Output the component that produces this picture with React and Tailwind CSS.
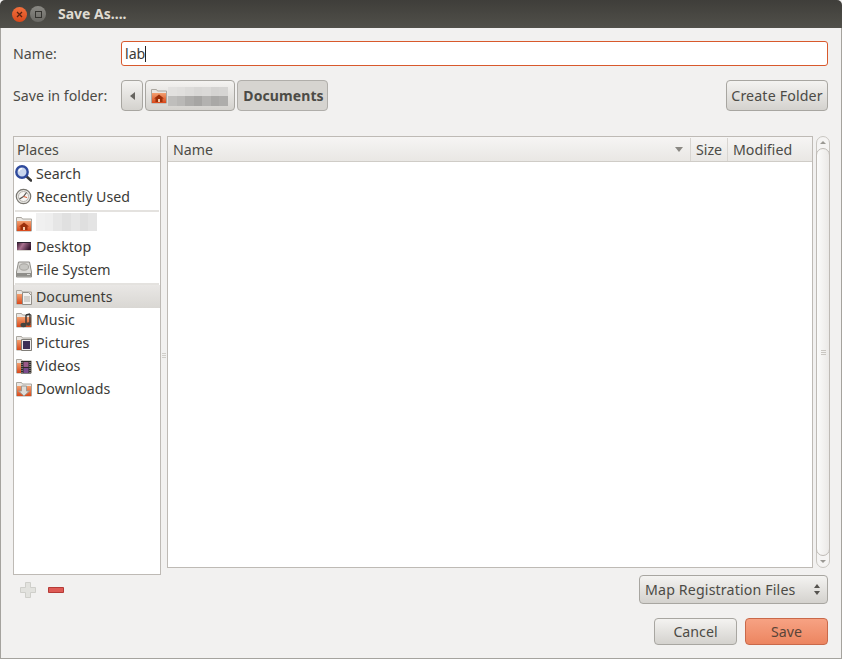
import React from 'react';

const FONT = "font-['Noto_Sans','Open_Sans',sans-serif]";

const Folder = ({ children }) => (
  <svg width="16" height="16" viewBox="0 0 16 16" className="shrink-0">
    <defs>
      <linearGradient id="fold" x1="0" y1="0" x2="0" y2="1">
        <stop offset="0" stopColor="#f3a070" />
        <stop offset="1" stopColor="#d9481a" />
      </linearGradient>
    </defs>
    <path d="M0.500 1.500h5l1 1.500h9v12h-15z" fill="#e9e6e2" stroke="#aaa69f" />
    <path d="M1 5h14v10H1z" fill="url(#fold)" />
    {children}
  </svg>
);

const HomeFolder = () => (
  <Folder>
    <path d="M8 6.500l5 4h-1.500v3.500h-7v-3.500H3z" fill="#9c2f0a" />
    <path d="M7 11h2v3H7z" fill="#f5c9a8" />
  </Folder>
);

const SearchIcon = () => (
  <svg width="17" height="17" viewBox="0 0 17 17" className="shrink-0">
    <path d="M11 11l5 4.500" stroke="#3a3a3a" strokeWidth="2.600" strokeLinecap="round" />
    <circle cx="7" cy="7" r="5.700" fill="#c9d6ee" stroke="#2f4a9c" strokeWidth="2.400" />
    <path d="M4 6.500a3.200 3.200 0 0 1 3.200-2.800" stroke="#fff" strokeWidth="1.200" fill="none" />
  </svg>
);

const ClockIcon = () => (
  <svg width="17" height="17" viewBox="0 0 17 17" className="shrink-0">
    <circle cx="8.500" cy="8.500" r="7.200" fill="#e6e5e2" stroke="#77756f" strokeWidth="1.200" />
    <circle cx="8.500" cy="8.500" r="5" fill="#f7f6f4" stroke="#b7b4ae" />
    <path d="M8.500 8.500l-4 2.500M8.500 8.500l3-4" stroke="#55534f" strokeWidth="1.200" />
    <path d="M8.500 8.500l3.500 1" stroke="#d9532c" />
  </svg>
);

const DesktopIcon = () => (
  <svg width="16" height="16" viewBox="0 0 16 16" className="shrink-0">
    <defs>
      <linearGradient id="desk" x1="0" y1="0" x2="1" y2="0.4">
        <stop offset="0" stopColor="#2c1126" />
        <stop offset="0.450" stopColor="#a9708f" />
        <stop offset="1" stopColor="#3a1a33" />
      </linearGradient>
    </defs>
    <path d="M1 3h14v9H1z" fill="url(#desk)" />
    <path d="M1 3h14v1H1z" fill="#2b2330" />
    <path d="M1 11h14v1H1z" fill="#d8d4d0" />
  </svg>
);

const DiskIcon = () => (
  <svg width="16" height="17" viewBox="0 0 16 17" className="shrink-0">
    <path d="M2.500 1h11l2 10v5H.5v-5z" fill="#dcdbd8" stroke="#8f8d88" />
    <ellipse cx="8" cy="6" rx="4.500" ry="3.200" fill="#c7c6c2" stroke="#a5a39e" />
    <path d="M1 12h14v3.500H1z" fill="#8f8e8a" />
    <path d="M11 13.500h3" stroke="#d6d5d2" />
  </svg>
);

const DocEmblem = () => (
  <>
    <path d="M6.500 3.500h6l3 3v9h-9z" fill="#f2f1ef" stroke="#918e88" />
    <path d="M8 8h6M8 10h6M8 12h6" stroke="#b2afa9" />
  </>
);

const MusicEmblem = () => (
  <>
    <path d="M10 3v9M14 2v9M10 3l4-1" stroke="#333" strokeWidth="1.400" fill="none" />
    <ellipse cx="7.500" cy="13" rx="3" ry="2.200" fill="#45443f" />
    <ellipse cx="12.500" cy="12" rx="2.300" ry="1.800" fill="#45443f" />
  </>
);

const PictureEmblem = () => (
  <>
    <path d="M5.500 4.500h10v11h-10z" fill="#efeeec" stroke="#807e78" />
    <path d="M7 6h7v8H7z" fill="#3d2f55" />
  </>
);

const VideoEmblem = () => (
  <>
    <path d="M5 3h10v12.500H5z" fill="#2f2c2a" />
    <path d="M7.500 4h5v5h-5z" fill="#9a5a88" />
    <path d="M7.500 10h5v5h-5z" fill="#7a4a8c" />
    <path d="M6 4v11M14 4v11" stroke="#b9b5ae" strokeDasharray="1 1" />
  </>
);

const DownloadEmblem = () => (
  <path d="M5.500 5h5v5h3l-5.500 5-5.500-5h3z" fill="#dedcd8" stroke="#9d9a94" />
);

// pixelated block standing in for the blurred-out user name
const Blur = ({ cells, className }) => (
  <div className={`flex ${className}`}>
    {cells.map((c, i) => (
      <div key={i} className="h-full flex-1" style={{ backgroundColor: c }} />
    ))}
  </div>
);

const PlaceRow = ({ icon, label, selected, children }) => (
  <div
    className={`h-[23px] flex items-center pl-px gap-[4px] ${
      selected ? 'bg-gradient-to-b from-[#e9e7e5] to-[#d9d7d3]' : ''
    }`}
  >
    <div className="w-[17px] flex justify-center shrink-0">{icon}</div>
    {label ? <span className="text-[#3c3b37]">{label}</span> : children}
  </div>
);

const Btn = ({ children, className = '' }) => (
  <div
    className={`flex items-center justify-center rounded-[4px] border border-[#a8a6a1] bg-gradient-to-b from-[#f4f3f1] to-[#d4d2ce] text-[#4c4b46] ${className}`}
  >
    {children}
  </div>
);

const Head = ({ children, className = '' }) => (
  <div className={`h-[25px] flex items-center bg-gradient-to-b from-[#f6f5f4] to-[#e9e7e4] border-b border-[#cfccc7] text-[#4c4b46] ${className}`}>
    {children}
  </div>
);

export default function App() {
  return (
    <div className={`w-[842px] h-[659px] flex flex-col bg-[#f2f1f0] text-[14.2px] leading-5 text-[#3c3b37] overflow-hidden ${FONT}`}>
      {/* title bar */}
      <div className="h-[28px] shrink-0 flex items-center pl-[12px] bg-gradient-to-b from-[#3f3e3a] to-[#51504a] rounded-t-[5px]">
        <div className="w-[15px] h-[15px] rounded-full bg-gradient-to-b from-[#f2703d] to-[#d9481a] flex items-center justify-center">
          <svg width="7" height="7" viewBox="0 0 7 7">
            <path d="M1 1l5 5M6 1l-5 5" stroke="#5a2310" strokeWidth="1.300" />
          </svg>
        </div>
        <div className="ml-[3px] w-[16px] h-[16px] rounded-full bg-gradient-to-b from-[#8a8984] to-[#6a6964] flex items-center justify-center">
          <div className="w-[7px] h-[7px] border border-[#34332f]" />
        </div>
        <span className="ml-[12px] text-[14px] font-bold text-[#dfdbd2]">Save As....</span>
      </div>

      <div className="flex-1 flex flex-col border-l border-r border-b border-[#a5a39e] pl-[12px] pr-[13px] pt-[13px]">
        {/* name */}
        <div className="flex items-center h-[25px]">
          <span className="w-[108px] text-[#4c4b46]">Name:</span>
          <div className="flex-1 h-[25px] flex items-center bg-white border border-[#d8592c] rounded-[3px] pl-[3px] text-[#3c3b37]">
            lab<span className="w-px h-[16px] bg-[#222]" />
          </div>
        </div>

        {/* save in folder */}
        <div className="flex items-center h-[31px] mt-[14px]">
          <span className="w-[108px] text-[#4c4b46]">Save in folder:</span>
          <Btn className="w-[22px] h-[31px] rounded-[4px]">
            <div className="w-0 h-0 border-y-[4px] border-y-transparent border-r-[5px] border-r-[#66645f]" />
          </Btn>
          <Btn className="w-[90px] h-[31px] ml-[2px] justify-start pl-[5px] gap-[1px]">
            <HomeFolder />
            <div className="flex flex-col mt-[2px]">
              <Blur cells={['#e2e1df', '#e0dfdd', '#dcdbd9', '#d8d7d5', '#dad9d7', '#d4d3d1', '#d6d5d3']} className="w-[60px] h-[9px]" />
              <Blur cells={['#bfbebc', '#b9b8b6', '#adacaa', '#a6a5a3', '#b3b2b0', '#a9a8a6', '#aeadab']} className="w-[60px] h-[10px]" />
            </div>
          </Btn>
          <Btn className="w-[91px] h-[31px] ml-[2px] pl-[2px] border-[#b0aeaa] !bg-none bg-[#d6d4d0] font-bold text-[14px] tracking-[0.1px]">
            Documents
          </Btn>
          <div className="flex-1" />
          <Btn className="w-[102px] h-[31px] tracking-[0.15px]">Create Folder</Btn>
        </div>

        {/* panes */}
        <div className="flex flex-1 mt-[25px]">
          {/* left column */}
          <div className="w-[148px] shrink-0 flex flex-col">
            <div className="h-[439px] bg-white border border-[#bebab5]">
              <Head className="pl-[3px] pt-[1px]">Places</Head>
              <PlaceRow icon={<SearchIcon />} label="Search" />
              <PlaceRow icon={<ClockIcon />} label="Recently Used" />
              <div className="h-[4px] mx-[1px] pt-[2px]"><div className="h-[2px] bg-[#e4e2df]" /></div>
              <PlaceRow icon={<HomeFolder />}>
                <Blur cells={['#f0f0f0', '#eeeeee', '#e6e6e6', '#e0e0e0', '#e6e6e6', '#dfdfdf', '#e4e4e4']} className="w-[61px] h-[18px] mb-[3px]" />
              </PlaceRow>
              <PlaceRow icon={<DesktopIcon />} label="Desktop" />
              <PlaceRow icon={<DiskIcon />} label="File System" />
              <div className="h-[4px] mx-[1px] pt-[2px]"><div className="h-[2px] bg-[#e4e2df]" /></div>
              <PlaceRow icon={<Folder><DocEmblem /></Folder>} label="Documents" selected />
              <PlaceRow icon={<Folder><MusicEmblem /></Folder>} label="Music" />
              <PlaceRow icon={<Folder><PictureEmblem /></Folder>} label="Pictures" />
              <PlaceRow icon={<Folder><VideoEmblem /></Folder>} label="Videos" />
              <PlaceRow icon={<Folder><DownloadEmblem /></Folder>} label="Downloads" />
            </div>
            <div className="flex items-center mt-[7px] pl-[7px] gap-[12px]">
              <svg width="16" height="16" viewBox="0 0 16 16">
                <path d="M5.500 0.500h5v5h5v5h-5v5h-5v-5h-5v-5h5z" fill="#e2e2de" stroke="#cfcfca" />
              </svg>
              <svg width="16" height="6" viewBox="0 0 16 6">
                <path d="M0.500 0.500h15v5H.5z" fill="#de5a55" stroke="#b53a36" />
              </svg>
            </div>
          </div>

          {/* drag handle */}
          <div className="w-[6px] shrink-0 h-[439px] flex flex-col items-center justify-center gap-[1px]">
            <div className="w-[4px] h-px bg-[#d0cec9]" />
            <div className="w-[4px] h-px bg-[#d0cec9]" />
            <div className="w-[4px] h-px bg-[#d0cec9]" />
          </div>

          {/* right column */}
          <div className="flex-1 flex flex-col">
            <div className="flex h-[432px]">
              <div className="w-[646px] border border-[#bebab5] bg-white">
                <Head className="pt-[1px]">
                  <div className="flex-1 flex items-center h-full pl-[5px] pr-[7px]">
                    <span className="flex-1">Name</span>
                    <div className="w-0 h-0 border-x-[4px] border-x-transparent border-t-[5px] border-t-[#8a8883]" />
                  </div>
                  <div className="w-[37px] h-full flex items-center justify-center border-l border-[#d8d5d1]">Size</div>
                  <div className="w-[85px] h-full flex items-center pl-[5px] border-l border-[#d8d5d1]">Modified</div>
                </Head>
              </div>
              {/* scrollbar */}
              <div className="ml-[3px] w-[14px] h-[432px] flex flex-col border border-[#c9c6c1] rounded-[7px] bg-[#f5f4f3]">
                <div className="h-[11px] flex items-center justify-center">
                  <div className="w-0 h-0 border-x-[3px] border-x-transparent border-b-[3px] border-b-[#9a9893]" />
                </div>
                <div className="flex-1 -mx-px flex flex-col items-center justify-center gap-[1px] rounded-[7px] border border-[#bebab5] bg-gradient-to-r from-[#fbfbfa] to-[#ebe9e7]">
                  <div className="w-[5px] h-px bg-[#c9c6c1]" />
                  <div className="w-[5px] h-px bg-[#c9c6c1]" />
                  <div className="w-[5px] h-px bg-[#c9c6c1]" />
                </div>
                <div className="h-[11px] flex items-center justify-center">
                  <div className="w-0 h-0 border-x-[3px] border-x-transparent border-t-[3px] border-t-[#9a9893]" />
                </div>
              </div>
            </div>

            <div className="flex justify-end mt-[7px] pr-[2px]">
              <Btn className="w-[189px] h-[29px] !justify-between pl-[5px] pr-[7px]">
                <span className="tracking-[0.15px]">Map Registration Files</span>
                <span className="flex flex-col gap-[3px]">
                  <span className="w-0 h-0 border-x-[3px] border-x-transparent border-b-[4px] border-b-[#55534f]" />
                  <span className="w-0 h-0 border-x-[3px] border-x-transparent border-t-[4px] border-t-[#55534f]" />
                </span>
              </Btn>
            </div>

            <div className="flex justify-end gap-[8px] mt-[14px] pr-[2px]">
              <Btn className="w-[83px] h-[27px]">Cancel</Btn>
              <Btn className="w-[83px] h-[27px] border-[#c9694a] from-[#f7a283] to-[#ec8560] text-[#5a4438]">Save</Btn>
            </div>
          </div>
        </div>
      </div>
    </div>
  );
}
